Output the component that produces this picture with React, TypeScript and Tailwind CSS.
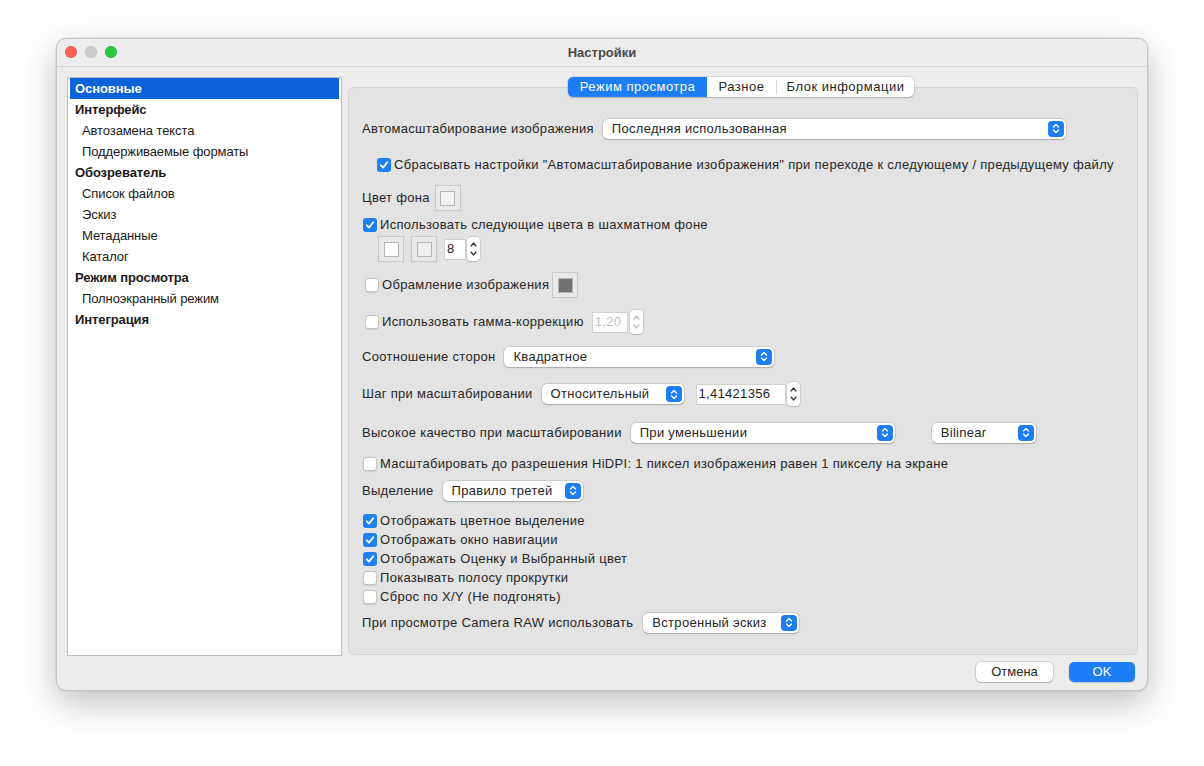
import React from "react";

const font = { fontFamily: '"Liberation Sans", Arial, sans-serif' };

const Chevrons = ({ color = "white" }: { color?: string }) => (
  <svg width="8" height="11" viewBox="0 0 8 11" fill="none">
    <path d="M1.5 4 L4 1.5 L6.5 4" stroke={color} strokeWidth="1.4" strokeLinecap="round" strokeLinejoin="round" />
    <path d="M1.5 7 L4 9.5 L6.5 7" stroke={color} strokeWidth="1.4" strokeLinecap="round" strokeLinejoin="round" />
  </svg>
);

const PopUp = ({ value, width }: { value: string; width: number }) => (
  <div
    className="flex h-[20px] shrink-0 items-center justify-between rounded-[5px] bg-white pl-[9px] pr-[2px] text-[13px] text-[#262626] shadow-[0_0_0_0.5px_rgba(0,0,0,0.2),0_1px_1.5px_rgba(0,0,0,0.18)]"
    style={{ width }}
  >
    <span>{value}</span>
    <div className="flex h-[16px] w-[16px] items-center justify-center rounded-[4px] bg-[#1c7df5]">
      <Chevrons />
    </div>
  </div>
);

const Checkbox = ({ checked }: { checked?: boolean }) =>
  checked ? (
    <div className="flex h-[14px] w-[14px] shrink-0 items-center justify-center rounded-[3px] bg-[#1f80f6]">
      <svg width="10" height="10" viewBox="0 0 10 10" fill="none">
        <path d="M1.8 5.3 L4 7.6 L8.3 2.2" stroke="white" strokeWidth="1.8" strokeLinecap="round" strokeLinejoin="round" />
      </svg>
    </div>
  ) : (
    <div className="h-[14px] w-[14px] shrink-0 rounded-[3px] border border-[#c4c4c4] bg-white shadow-[0_0.5px_1px_rgba(0,0,0,0.1)]" />
  );

const CheckRow = ({ checked, label, className = "" }: { checked?: boolean; label: string; className?: string }) => (
  <div className={`flex h-[19px] items-center gap-[3px] text-[13px] text-[#262626] ${className}`}>
    <Checkbox checked={checked} />
    <span>{label}</span>
  </div>
);

const Swatch = ({ color }: { color: string }) => (
  <div className="flex h-[26px] w-[26px] shrink-0 items-center justify-center border border-[#c9c9c9] bg-[#e9e9e9]">
    <div className="h-[15px] w-[15px] border border-[#b4b4b4]" style={{ background: color }} />
  </div>
);

const Stepper = ({ disabled }: { disabled?: boolean }) => (
  <div className="flex h-[24px] w-[13px] shrink-0 items-center justify-center rounded-[4px] bg-white shadow-[0_0_0_0.5px_rgba(0,0,0,0.18),0_1px_1px_rgba(0,0,0,0.12)]">
    <svg width="9" height="20" viewBox="0 0 9 20" fill="none">
      <path d="M2 7 L4.5 4 L7 7" stroke={disabled ? "#bdbdbd" : "#333"} strokeWidth="1.2" strokeLinecap="round" strokeLinejoin="round" />
      <path d="M2 13 L4.5 16 L7 13" stroke={disabled ? "#bdbdbd" : "#333"} strokeWidth="1.2" strokeLinecap="round" strokeLinejoin="round" />
    </svg>
  </div>
);

const Field = ({ value, width, disabled }: { value: string; width: number; disabled?: boolean }) => (
  <div
    className={`flex h-[21px] shrink-0 items-center border border-[#d2d2d2] bg-white pl-[2px] text-[13px] ${disabled ? "text-[#bdbdbd]" : "text-[#1e1e1e]"}`}
    style={{ width }}
  >
    {value}
  </div>
);

const sidebar: { label: string; bold?: boolean; selected?: boolean }[] = [
  { label: "Основные", bold: true, selected: true },
  { label: "Интерфейс", bold: true },
  { label: "Автозамена текста" },
  { label: "Поддерживаемые форматы" },
  { label: "Обозреватель", bold: true },
  { label: "Список файлов" },
  { label: "Эскиз" },
  { label: "Метаданные" },
  { label: "Каталог" },
  { label: "Режим просмотра", bold: true },
  { label: "Полноэкранный режим" },
  { label: "Интеграция", bold: true },
];

export default function App() {
  return (
    <div className="h-[766px] w-[1204px] bg-white pl-[56px] pt-[38px]" style={font}>
      <div className="flex h-[653px] w-[1092px] flex-col overflow-hidden rounded-[10px] border border-[#c6c6c6] bg-[#ececec] shadow-[0_12px_35px_rgba(0,0,0,0.25),0_0_0_0.5px_rgba(0,0,0,0.1)]">
        {/* title bar */}
        <div className="relative flex h-[28px] shrink-0 items-center justify-center border-b border-[#d3d3d3] bg-[#ededed]">
          <div className="absolute left-[8px] top-[7px] flex gap-[8px]">
            <div className="h-[12px] w-[12px] rounded-full bg-[#fe5f57] shadow-[inset_0_0_0_0.5px_rgba(0,0,0,0.15)]" />
            <div className="h-[12px] w-[12px] rounded-full bg-[#cdcdcd] shadow-[inset_0_0_0_0.5px_rgba(0,0,0,0.12)]" />
            <div className="h-[12px] w-[12px] rounded-full bg-[#28c840] shadow-[inset_0_0_0_0.5px_rgba(0,0,0,0.15)]" />
          </div>
          <span className="text-[13px] font-bold text-[#4a4a4a]">Настройки</span>
        </div>

        {/* body */}
        <div className="flex flex-1 gap-[6px] pl-[10px] pr-[9px] pt-[10px]">
          <div className="h-[579px] w-[275px] shrink-0 border border-[#bdbdbd] bg-white px-[2px]">
            {sidebar.map((item) => (
              <div
                key={item.label}
                className={`flex h-[21px] items-center text-[13px] tracking-[-0.1px] ${item.bold ? "pl-[5px] font-bold" : "pl-[12px]"} ${item.selected ? "bg-[#0a63d8] text-white" : "text-[#1a1a1a]"}`}
              >
                {item.label}
              </div>
            ))}
          </div>

          <div className="flex flex-1 flex-col">
            <div className="relative z-10 flex justify-center pr-[4px]">
              <div className="flex h-[20px] overflow-hidden rounded-[5px] bg-white text-[13px] tracking-[0.5px] text-[#262626] shadow-[0_0_0_0.5px_rgba(0,0,0,0.18),0_1px_1.5px_rgba(0,0,0,0.15)]">
                <div className="flex w-[139px] items-center justify-center bg-[#1c7df5] text-white">Режим просмотра</div>
                <div className="flex w-[69px] items-center justify-center">Разное</div>
                <div className="my-[3px] w-px bg-[#d8d8d8]" />
                <div className="flex w-[137px] items-center justify-center">Блок информации</div>
              </div>
            </div>

            <div className="-mt-[10px] flex h-[568px] flex-col rounded-[5px] border border-[#d4d4d4] bg-[#e3e3e3] pl-[13px] text-[13px] tracking-[0.3px] text-[#262626]">
              <div className="mt-[30px] flex h-[21px] items-center gap-[9px]">
                <span>Автомасштабирование изображения</span>
                <PopUp value="Последняя использованная" width={463} />
              </div>

              <CheckRow checked className="ml-[15px] mt-[16px]" label={'Сбрасывать настройки "Автомасштабирование изображения" при переходе к следующему / предыдущему файлу'} />

              <div className="mt-[11px] flex h-[26px] items-center gap-[5px]">
                <span>Цвет фона</span>
                <Swatch color="#f2f2f2" />
              </div>

              <CheckRow checked className="ml-[1px] mt-[4px]" label="Использовать следующие цвета в шахматном фоне" />

              <div className="ml-[16px] mt-[2px] flex h-[26px] items-center">
                <Swatch color="#ffffff" />
                <div className="ml-[7px]">
                  <Swatch color="#efefef" />
                </div>
                <div className="ml-[7px]">
                  <Field value="8" width={22} />
                </div>
                <div className="ml-[1px]">
                  <Stepper />
                </div>
              </div>

              <div className="ml-[3px] mt-[10px] flex h-[26px] items-center">
                <Checkbox />
                <span className="ml-[3px]">Обрамление изображения</span>
                <div className="ml-[3px]">
                  <Swatch color="#727272" />
                </div>
              </div>

              <div className="ml-[3px] mt-[12px] flex h-[24px] items-center">
                <Checkbox />
                <span className="ml-[3px]">Использовать гамма-коррекцию</span>
                <div className="ml-[8px]">
                  <Field value="1,20" width={36} disabled />
                </div>
                <div className="ml-[2px]">
                  <Stepper disabled />
                </div>
              </div>

              <div className="mt-[12px] flex h-[21px] items-center gap-[9px]">
                <span>Соотношение сторон</span>
                <PopUp value="Квадратное" width={270} />
              </div>

              <div className="mt-[15px] flex h-[24px] items-center">
                <span>Шаг при масштабировании</span>
                <div className="ml-[9px]">
                  <PopUp value="Относительный" width={142} />
                </div>
                <div className="ml-[12px]">
                  <Field value="1,41421356" width={90} />
                </div>
                <div className="ml-[1px]">
                  <Stepper />
                </div>
              </div>

              <div className="mt-[16px] flex h-[21px] items-center">
                <span>Высокое качество при масштабировании</span>
                <div className="ml-[9px]">
                  <PopUp value="При уменьшении" width={264} />
                </div>
                <div className="ml-[37px]">
                  <PopUp value="Bilinear" width={104} />
                </div>
              </div>

              <CheckRow className="ml-[1px] mt-[11px]" label="Масштабировать до разрешения HiDPI: 1 пиксел изображения равен 1 пикселу на экране" />

              <div className="mt-[7px] flex h-[21px] items-center gap-[9px]">
                <span>Выделение</span>
                <PopUp value="Правило третей" width={140} />
              </div>

              <div className="ml-[1px] mt-[10px] flex flex-col">
                <CheckRow checked label="Отображать цветное выделение" />
                <CheckRow checked label="Отображать окно навигации" />
                <CheckRow checked label="Отображать Оценку и Выбранный цвет" />
                <CheckRow label="Показывать полосу прокрутки" />
                <CheckRow label="Сброс по X/Y (Не подгонять)" />
              </div>

              <div className="mt-[6px] flex h-[21px] items-center gap-[10px]">
                <span>При просмотре Camera RAW использовать</span>
                <PopUp value="Встроенный эскиз" width={156} />
              </div>
            </div>
          </div>
        </div>

        {/* footer buttons */}
        <div className="flex h-[37px] shrink-0 items-start justify-end gap-[16px] pr-[12px] pt-[6px]">
          <div className="flex h-[20px] w-[77px] items-center justify-center rounded-[5px] bg-white text-[13px] text-[#262626] shadow-[0_0_0_0.5px_rgba(0,0,0,0.2),0_1px_1.5px_rgba(0,0,0,0.18)]">
            Отмена
          </div>
          <div className="flex h-[20px] w-[66px] items-center justify-center rounded-[5px] bg-[#1c7df5] text-[13px] text-white shadow-[0_1px_1.5px_rgba(0,0,0,0.15)]">
            OK
          </div>
        </div>
      </div>
    </div>
  );
}
